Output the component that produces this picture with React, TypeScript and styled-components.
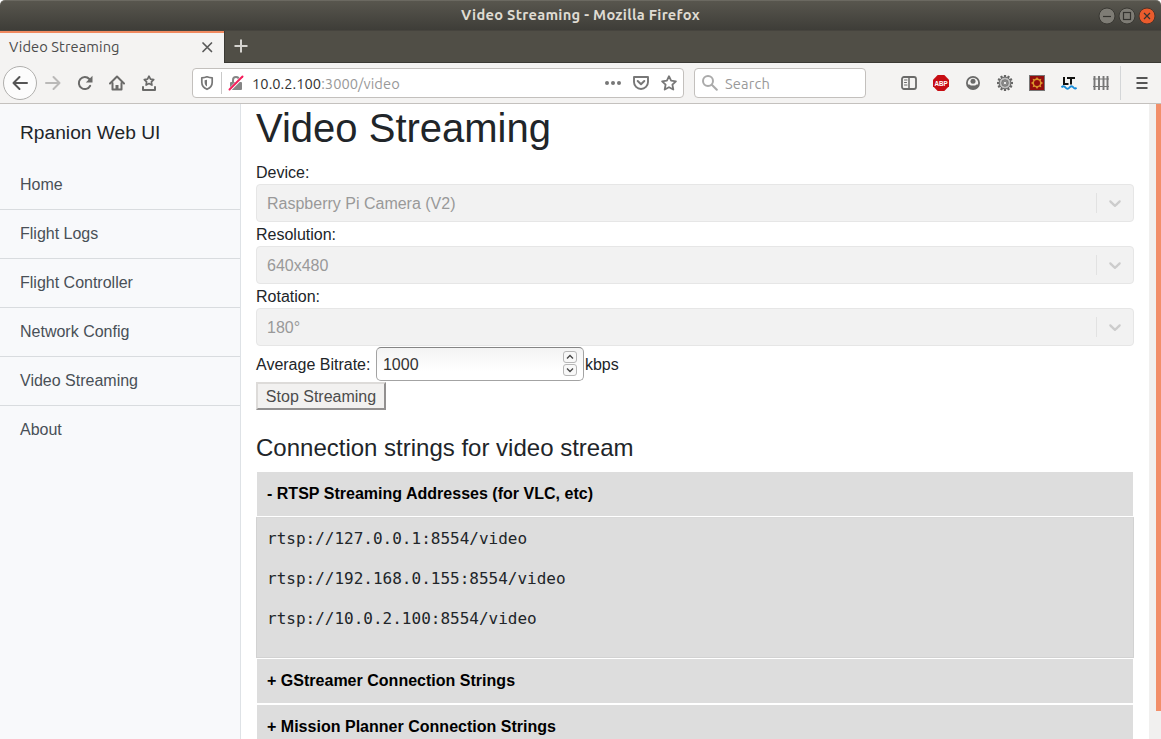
import React from 'react';
import styled, { createGlobalStyle } from 'styled-components';

const GlobalStyle = createGlobalStyle`
  *, *::before, *::after { box-sizing: border-box; }
  html, body { margin: 0; padding: 0; overflow: hidden; }
  body { background: #fff; }
  button, input { font: inherit; }
`;

const uiFont = '"Ubuntu", "Noto Sans", "Open Sans", sans-serif';

const Window = styled.div`
  width: 1161px;
  height: 739px;
  display: flex;
  flex-direction: column;
  overflow: hidden;
  font-family: ${uiFont};
`;

const TitleBar = styled.header`
  height: 30px;
  flex: none;
  display: grid;
  grid-template-columns: 1fr auto 1fr;
  align-items: center;
  border-radius: 5px 5px 0 0;
  border-top: 1px solid #6b6961;
  background: linear-gradient(#58564e, #3e3d38);
`;

const WindowTitle = styled.div`
  grid-column: 2;
  padding-bottom: 2px;
  color: #dfdbd2;
  font-size: 14.667px;
  font-weight: 700;
  line-height: 20px;
  letter-spacing: 0.28px;
  white-space: nowrap;
`;

const WindowControls = styled.div`
  display: flex;
  justify-content: flex-end;
  gap: 2px;
  padding-right: 5px;
`;

const TabStrip = styled.div`
  height: 33px;
  flex: none;
  display: flex;
  background: #504e46;
  border-bottom: 1px solid #3a3934;
  border-top: 1px solid #46443e;
`;

const Tab = styled.div`
  width: 224px;
  height: 33px;
  display: flex;
  align-items: center;
  justify-content: space-between;
  padding: 0 11px 4px 9px;
  border-top: 2px solid #f0895f;
  background: #f4f3f2;
  color: #4c4c4c;
  font-size: 14.667px;
  letter-spacing: 0.07px;
  white-space: nowrap;
`;

const NewTab = styled.div`
  width: 34px;
  display: flex;
  align-items: center;
  justify-content: center;
  padding: 0 2px 2px 0;
  border-left: 1px solid #3a3934;
`;

const Toolbar = styled.nav`
  height: 41px;
  flex: none;
  display: flex;
  align-items: center;
  padding: 0 0 1px 3px;
  background: #f4f3f2;
  border-bottom: 1px solid #c4c1be;
`;

const BackButton = styled.div`
  width: 34px;
  height: 34px;
  display: flex;
  align-items: center;
  justify-content: center;
  border: 1px solid #b0afad;
  border-radius: 50%;
  background: #fcfcfc;
`;

const NavButtons = styled.div`
  display: flex;
  gap: 16px;
  margin-left: 8px;
`;

const Field = styled.div<{ $width: number; $left: number }>`
  width: ${p => p.$width}px;
  height: 30px;
  margin-left: ${p => p.$left}px;
  display: flex;
  align-items: center;
  padding: 0 6px;
  border: 1px solid #c3c0bd;
  border-radius: 4px;
  background: #fff;
  font-size: 14.667px;
  color: #999;
  white-space: nowrap;
`;

const FieldDivider = styled.span`
  width: 1px;
  height: 22px;
  margin: 0 6px;
  background: #c9c9c9;
`;

const Address = styled.span`
  flex: 1;
  margin-left: 8px;
  padding-top: 2px;
  letter-spacing: 0.05px;
`;

const Host = styled.span`
  color: #333;
`;

const FieldActions = styled.span`
  display: flex;
  gap: 12px;
`;

const SearchHint = styled.span`
  margin-left: 7px;
  padding-top: 2px;
  letter-spacing: 0.15px;
`;

const Extensions = styled.div`
  flex: 1;
  display: flex;
  justify-content: flex-end;
  gap: 16px;
  padding-right: 11px;
`;

const MenuButton = styled.div`
  width: 41px;
  height: 34px;
  display: flex;
  align-items: center;
  justify-content: center;
  padding-left: 2px;
  border-left: 1px solid #d4d6d8;
`;

const Page = styled.div`
  flex: 1;
  min-height: 0;
  display: flex;
  overflow: hidden;
  background: #fff;
  color: #212529;
  font-family: "Liberation Sans", Arial, sans-serif;
  font-size: 16px;
  line-height: 24px;
`;

const Sidebar = styled.aside`
  width: 241px;
  flex: none;
  border-right: 1px solid #dee2e6;
  background: #f8f9fb;
`;

const Brand = styled.div`
  height: 57px;
  padding: 14px 20px;
  font-size: 19.2px;
  line-height: 29px;
`;

const NavItem = styled.a<{ $last?: boolean }>`
  display: block;
  height: 49px;
  padding: 12px 20px;
  border-bottom: 1px solid ${p => (p.$last ? 'transparent' : '#d9dcdf')};
  color: #495057;
`;

const Main = styled.main`
  flex: 1;
  min-width: 0;
  padding: 0 15px;
`;

const Title = styled.h1`
  margin: 0 0 8px;
  font-size: 40px;
  font-weight: 400;
  line-height: 48px;
`;

const Label = styled.div`
  height: 24px;
  padding-top: 1px;
`;

const Select = styled.div`
  height: 38px;
  display: flex;
  align-items: center;
  padding-left: 10px;
  border: 1px solid #e6e6e6;
  border-radius: 4px;
  background: #f2f2f2;
  color: #999;
`;

const SelectValue = styled.span`
  flex: 1;
  padding-top: 2px;
`;

const Indicator = styled.span`
  width: 37px;
  height: 20px;
  display: flex;
  align-items: center;
  justify-content: center;
  border-left: 1px solid #e2e2e2;
`;

const BitrateRow = styled.div`
  height: 36px;
  display: flex;
  align-items: center;
`;

const BitrateText = styled.span`
  padding-top: 2px;
`;

const NumberBox = styled.div`
  width: 208px;
  height: 34px;
  margin: 0 0.5px 0 6px;
  display: flex;
  align-items: center;
  justify-content: space-between;
  padding: 0 6px 0 5.5px;
  border: 1px solid #a3a3a3;
  border-top-color: #858585;
  border-radius: 5px;
  background: linear-gradient(#f3f3f3, #fff 75%);
  color: #333;
`;

const Spinner = styled.span`
  display: flex;
  flex-direction: column;
  gap: 1px;
  padding-bottom: 1px;
`;

const Step = styled.span`
  width: 14px;
  height: 12px;
  display: flex;
  align-items: center;
  justify-content: center;
  border: 1px solid #b7b7b7;
  border-radius: 3px;
  background: #f8f8f8;
`;

const StopButton = styled.button`
  display: block;
  width: 130px;
  height: 28px;
  padding: 1px 0 0;
  border: 2px solid;
  border-color: #dddbd9 #929090 #929090 #dddbd9;
  border-radius: 0;
  background: #f2f1f0;
  color: #4c4c4c;
  line-height: 23px;
`;

const Subtitle = styled.h3`
  margin: 23px 0 9px;
  font-size: 24px;
  font-weight: 400;
  line-height: 29px;
`;

const Accordion = styled.div`
  display: flex;
  flex-direction: column;
  padding-top: 1px;
`;

const AccordionHeader = styled.div<{ $gap: number }>`
  height: 44px;
  margin: 0 1px ${p => p.$gap}px;
  padding: 10px;
  background: #ddd;
  color: #000;
  font-weight: 700;
  letter-spacing: 0.015px;
`;

const AccordionPanel = styled.div`
  height: 141px;
  margin-bottom: 1px;
  padding: 9px 10px;
  border: 1px solid #d2d2d2;
  border-top-color: #d9d9d9;
  background: #ddd;
`;

const StreamAddress = styled.p`
  margin: 0 0 16px;
  font-family: "DejaVu Sans Mono", monospace;
  font-size: 16px;
  line-height: 24px;
`;

const ScrollTrack = styled.div`
  width: 12px;
  flex: none;
  padding-left: 7px;
  background: #f1f0ef;
`;

const ScrollThumb = styled.div`
  height: 607px;
  background: #f28f6a;
`;

const Icon = ({ children, size = 16, color = '#6a6a69' }: { children: React.ReactNode; size?: number; color?: string }) => (
  <svg width={size} height={size} viewBox={`0 0 ${size} ${size}`} fill="none" stroke={color} strokeWidth="2" strokeLinecap="round" strokeLinejoin="round">
    {children}
  </svg>
);

const ControlDot = ({ kind }: { kind: 'min' | 'max' | 'close' }) => (
  <svg width="18" height="18" viewBox="0 0 18 18" fill="none" stroke="#34332f" strokeWidth="1.2">
    <circle cx="9" cy="9" r="8" fill={kind === 'close' ? '#ea5b2c' : '#7e7c75'} stroke={kind === 'close' ? '#4a342b' : '#393833'} strokeWidth="1" />
    {kind === 'min' && <path d="M5 9.5h8" />}
    {kind === 'max' && <rect x="5.5" y="5.5" width="7" height="7" />}
    {kind === 'close' && <path d="M6 6l6 6M12 6l-6 6" />}
  </svg>
);

const gearTeeth = Array.from({ length: 12 }, (_, i) => i * 30);
const sunTeeth = Array.from({ length: 8 }, (_, i) => i * 45);

const Chevron = () => (
  <svg width="20" height="20" viewBox="0 0 20 20" fill="#ccc">
    <path d="M4.516 7.548c0.436-0.446 1.043-0.481 1.576 0l3.908 3.747 3.908-3.747c0.533-0.481 1.141-0.446 1.574 0 0.436 0.445 0.408 1.197 0 1.615-0.406 0.418-4.695 4.502-4.695 4.502-0.217 0.223-0.502 0.335-0.787 0.335s-0.57-0.112-0.789-0.335c0 0-4.287-4.084-4.695-4.502s-0.436-1.17 0-1.615z" />
  </svg>
);

const selects = [
  ['Device:', 'Raspberry Pi Camera (V2)'],
  ['Resolution:', '640x480'],
  ['Rotation:', '180°'],
];
const pages = ['Home', 'Flight Logs', 'Flight Controller', 'Network Config', 'Video Streaming', 'About'];
const streams = ['rtsp://127.0.0.1:8554/video', 'rtsp://192.168.0.155:8554/video', 'rtsp://10.0.2.100:8554/video'];

export default function App() {
  return (
    <Window>
      <GlobalStyle />
      <TitleBar>
        <WindowTitle>Video Streaming - Mozilla Firefox</WindowTitle>
        <WindowControls>
          <ControlDot kind="min" />
          <ControlDot kind="max" />
          <ControlDot kind="close" />
        </WindowControls>
      </TitleBar>
      <TabStrip>
        <Tab>
          Video Streaming
          <Icon size={12} color="#5a5a5a"><path d="M2 2l8.500 8.500M10.500 2l-8.500 8.500" strokeWidth="1.700" /></Icon>
        </Tab>
        <NewTab>
          <Icon color="#d5d3cf"><path d="M8 1.500v13M1.500 8h13" strokeLinecap="butt" /></Icon>
        </NewTab>
      </TabStrip>
      <Toolbar>
        <BackButton>
          <Icon color="#555"><path d="M15 8H1.500M7.500 2L1.500 8l6 6" /></Icon>
        </BackButton>
        <NavButtons>
          <Icon color="#bab9b8"><path d="M1 8h13.500M8.500 2l6 6-6 6" /></Icon>
          <Icon>
            <path d="M13.200 10.800A6 6 0 1 1 12.300 4" />
            <path d="M15.500 .800v6.700h-6.700z" fill="#6a6a69" stroke="none" />
          </Icon>
          <Icon>
            <path d="M1 8.500L8 1.500l7 7" />
            <path d="M3.500 8v6.500h9V8" />
            <path d="M8 14v-4" strokeWidth="3" strokeLinecap="butt" />
          </Icon>
          <Icon>
            <path d="M8 1.200l1.500 2.900 3.200.5-2.300 2.300.5 3.200L8 8.600l-2.900 1.500.5-3.200-2.300-2.300 3.200-.5z" strokeWidth="1.700" />
            <path d="M2 12v3h12v-3" />
          </Icon>
        </NavButtons>
        <Field $width={492} $left={35}>
          <Icon color="#777">
            <path d="M8 1.800c2 .8 3.600 1 5.200 1v4.500c0 3.600-2 5.700-5.200 7-3.200-1.300-5.200-3.400-5.200-7V2.800c1.600 0 3.200-.2 5.200-1z" strokeWidth="1.700" />
            <path d="M8 4.700v6.700c-1.600-.9-2.400-2.200-2.400-4.200V5.200c.9 0 1.700-.2 2.400-.5z" fill="#777" stroke="none" />
          </Icon>
          <FieldDivider />
          <Icon color="#858585">
            <path d="M5 8V5a3 3 0 0 1 6 0v3" />
            <rect x="2" y="7" width="12" height="8" rx="1" fill="#858585" stroke="none" />
            <path d="M1 15.500L15 1.500" stroke="#fff" strokeWidth="3.200" strokeLinecap="butt" />
            <path d="M1.500 14.500L14.500 1.500" stroke="#f51d5a" strokeWidth="2" />
          </Icon>
          <Address><Host>10.0.2.100</Host>:3000/video</Address>
          <FieldActions>
            <Icon color="#777"><g fill="#777" stroke="none"><circle cx="2" cy="8" r="2" /><circle cx="8" cy="8" r="2" /><circle cx="14" cy="8" r="2" /></g></Icon>
            <Icon color="#777">
              <path d="M1 2h14v5a7 7 0 0 1-14 0z" strokeWidth="1.900" />
              <path d="M4.700 6l3.300 3.200L11.300 6" />
            </Icon>
            <Icon color="#777"><path d="M8 1.200l2.100 4.400 4.800.7-3.500 3.400.9 4.800L8 12.200l-4.300 2.300.9-4.800L1.100 6.300l4.800-.7z" strokeWidth="1.800" /></Icon>
          </FieldActions>
        </Field>
        <Field $width={172} $left={10}>
          <svg width="17" height="18" viewBox="0 0 17 18" fill="none" stroke="#aaa" strokeWidth="2" strokeLinecap="round">
            <circle cx="7" cy="7" r="5" /><path d="M10.800 10.800l5 5" />
          </svg>
          <SearchHint>Search</SearchHint>
        </Field>
        <Extensions>
          <Icon>
            <rect x="1" y="2" width="14" height="12" rx="2" strokeWidth="1.800" />
            <path d="M8 2v12" strokeWidth="1.500" /><path d="M3.500 5h2.500M3.500 7.500h2M3.500 10h2.500" strokeWidth="1" />
          </Icon>
          <svg width="16" height="16" viewBox="0 0 16 16" overflow="visible">
            <path d="M4.700 0h6.600L16 4.700v6.600L11.300 16H4.700L0 11.300V4.700z" fill="#c70d13" />
            <text x="1.400" y="10.800" textLength="13.200" lengthAdjust="spacingAndGlyphs" fontFamily="Liberation Sans, sans-serif" fontWeight="700" fontSize="8" fill="#fff">ABP</text>
          </svg>
          <Icon>
            <circle cx="8" cy="8" r="6.100" strokeWidth="1.800" />
            <circle cx="8" cy="6.300" r="2.500" fill="#6a6a69" stroke="none" />
            <path d="M2.200 9.400h2.200c1.300 1.600 5.900 1.600 7.200 0h2.200c-.5 3-2.600 4.900-5.800 4.900s-5.300-1.900-5.800-4.900z" fill="#6a6a69" stroke="none" />
          </Icon>
          <svg width="16" height="16" viewBox="0 0 16 16">
            {gearTeeth.map(a => <rect key={a} x="6.900" y="0" width="2.200" height="3" fill="#666" transform={`rotate(${a} 8 8)`} />)}
            <circle cx="8" cy="8" r="5.900" fill="#bdbdbd" stroke="#6c6c6c" strokeWidth="1" />
            <circle cx="8" cy="8" r="3.300" fill="#909090" stroke="#6f6f6f" strokeWidth=".8" />
            <circle cx="8" cy="8" r="1.600" fill="#f2f2f2" stroke="#666" strokeWidth=".6" />
          </svg>
          <svg width="16" height="16" viewBox="0 0 16 16">
            <rect x=".5" y=".5" width="15" height="15" fill="#930d0d" stroke="#777" />
            {sunTeeth.map(a => <path key={a} d="M6.600 4L8 1.900 9.400 4z" fill="#d9922b" transform={`rotate(${a} 8 8)`} />)}
            <circle cx="8" cy="8" r="3.700" fill="none" stroke="#d9922b" strokeWidth="1.400" />
          </svg>
          <svg width="16" height="16" viewBox="0 0 16 16" fill="none">
            <path d="M3 2v7h4.500M6 3h8M10 3v6.500" stroke="#111" strokeWidth="2" />
            <path d="M.5 12.500c1.300-1.700 2.700-1.700 4 0s2.700 1.700 4 0 2.700-1.700 4 0 2.200 1 3 0" stroke="#168bd9" strokeWidth="2" />
          </svg>
          <Icon color="#777">
            <path d="M1.500 1v14M6 1v14M10.500 1v14M14.500 1v14" strokeWidth="1.900" strokeLinecap="butt" />
            <path d="M0 4h16M0 11.500h16" strokeWidth="1" strokeLinecap="butt" />
          </Icon>
        </Extensions>
        <MenuButton>
          <Icon color="#555"><path d="M2.500 3h11M2.500 8h11M2.500 13h11" strokeWidth="1.900" strokeLinecap="butt" /></Icon>
        </MenuButton>
      </Toolbar>
      <Page>
        <Sidebar>
          <Brand>Rpanion Web UI</Brand>
          {pages.map((name, i) => <NavItem key={name} $last={i === pages.length - 1}>{name}</NavItem>)}
        </Sidebar>
        <Main>
          <Title>Video Streaming</Title>
          {selects.map(([label, value]) => (
            <React.Fragment key={label}>
              <Label>{label}</Label>
              <Select>
                <SelectValue>{value}</SelectValue>
                <Indicator><Chevron /></Indicator>
              </Select>
            </React.Fragment>
          ))}
          <BitrateRow>
            <BitrateText>Average Bitrate:</BitrateText>
            <NumberBox>
              <BitrateText>1000</BitrateText>
              <Spinner>
                <Step><svg width="8" height="6" viewBox="0 0 8 6" fill="none" stroke="#444" strokeWidth="1.300"><path d="M1 4.500L4 1.500l3 3" /></svg></Step>
                <Step><svg width="8" height="6" viewBox="0 0 8 6" fill="none" stroke="#444" strokeWidth="1.300"><path d="M1 1.500l3 3 3-3" /></svg></Step>
              </Spinner>
            </NumberBox>
            <BitrateText>kbps</BitrateText>
          </BitrateRow>
          <StopButton>Stop Streaming</StopButton>
          <Subtitle>Connection strings for video stream</Subtitle>
          <Accordion>
            <AccordionHeader $gap={1}>- RTSP Streaming Addresses (for VLC, etc)</AccordionHeader>
            <AccordionPanel>
              {streams.map(s => <StreamAddress key={s}>{s}</StreamAddress>)}
            </AccordionPanel>
            <AccordionHeader $gap={2}>+ GStreamer Connection Strings</AccordionHeader>
            <AccordionHeader $gap={2}>+ Mission Planner Connection Strings</AccordionHeader>
          </Accordion>
        </Main>
        <ScrollTrack><ScrollThumb /></ScrollTrack>
      </Page>
    </Window>
  );
}
